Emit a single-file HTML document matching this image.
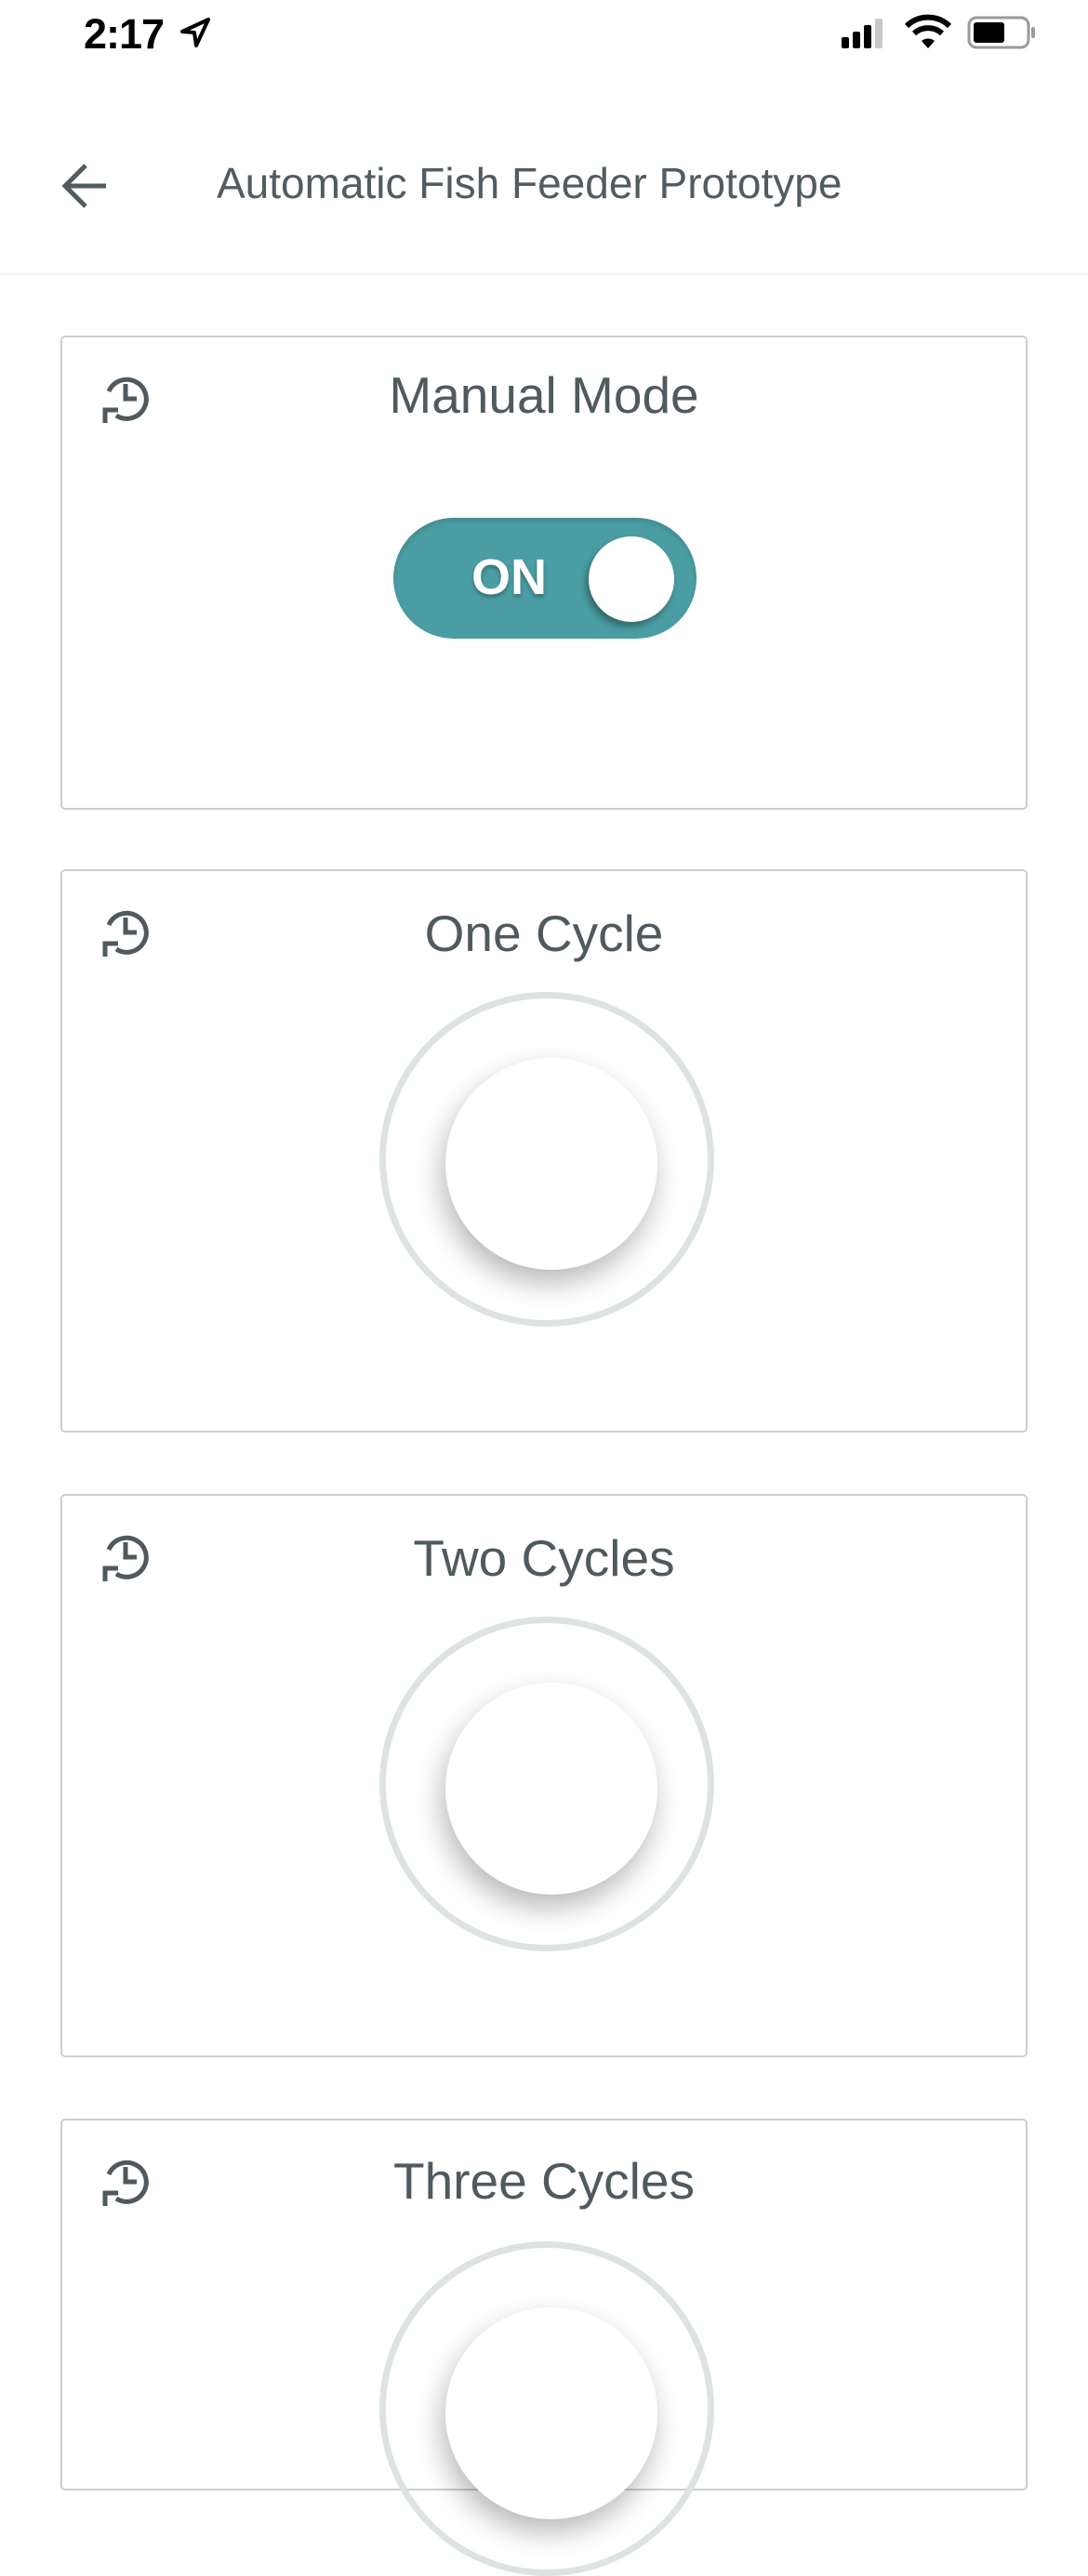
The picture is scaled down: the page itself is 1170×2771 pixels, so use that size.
<!DOCTYPE html>
<html><head><meta charset="utf-8"><style>
*{margin:0;padding:0;box-sizing:border-box}
body{width:1170px;height:2438px;overflow:hidden;background:#fff;font-family:"Liberation Sans",sans-serif;position:relative;color:#4f5a5e}
.abs{position:absolute}
.time{left:90px;top:11px;font-size:45px;font-weight:bold;color:#000;letter-spacing:-1px}
.title{left:233px;top:170px;font-size:46px;color:#515c61;letter-spacing:0px}
.divider{left:0;top:294px;width:1170px;height:2px;background:#f0f2f2}
.card{position:absolute;left:65px;width:1040px;border:2px solid #c9cfd0;border-radius:5px;background:#fff}
.ct{position:absolute;left:0;width:100%;text-align:center;font-size:55px;color:#4f5a5e}
.ic{position:absolute;left:40px;top:36px}
.ring{position:absolute;left:341px;width:360px;height:360px;border:7px solid #dde3e2;border-radius:50%}
.knob{position:absolute;left:64px;top:64px;width:228px;height:228px;border-radius:50%;background:#fff;box-shadow:-4px 14px 30px rgba(0,0,0,.28)}
</style></head><body>
<div class="abs time">2:17</div>
<svg class="abs" style="left:192px;top:18px" width="36" height="34" viewBox="0 0 36 34"><path d="M32 3 L4 16 L17 17 L19 31 Z" fill="none" stroke="#000" stroke-width="4" stroke-linejoin="round"/></svg>
<svg class="abs" style="left:905px;top:18px" width="52" height="34" viewBox="0 0 52 34"><rect x="0" y="22" width="8" height="12" rx="2" fill="#000"/><rect x="12" y="16" width="8" height="18" rx="2" fill="#000"/><rect x="24" y="9" width="8" height="25" rx="2" fill="#000"/><rect x="36" y="2" width="8" height="32" rx="2" fill="#c8c8c8"/></svg>
<svg class="abs" style="left:972px;top:15px" width="52" height="38" viewBox="0 0 52 38"><path d="M3 13 A33 33 0 0 1 49 13" fill="none" stroke="#000" stroke-width="6"/><path d="M11 21 A22 22 0 0 1 41 21" fill="none" stroke="#000" stroke-width="6"/><path d="M19 29 L26 37 L33 29 A11 11 0 0 0 19 29Z" fill="#000"/></svg>
<svg class="abs" style="left:1040px;top:17px" width="76" height="36" viewBox="0 0 76 36"><rect x="2" y="2" width="64" height="32" rx="8" fill="none" stroke="#9a9a9a" stroke-width="3"/><rect x="7" y="7" width="33" height="22" rx="3" fill="#000"/><rect x="69" y="12" width="4" height="12" rx="2" fill="#9a9a9a"/></svg>
<svg class="abs" style="left:64px;top:172px" width="56" height="56" viewBox="0 0 56 56"><path d="M50 28 H6 M28 6 L6 28 L28 50" fill="none" stroke="#515c61" stroke-width="5"/></svg>
<div class="abs title">Automatic Fish Feeder Prototype</div>
<div class="abs divider"></div>

<div class="card" style="top:361px;height:510px">
 <svg class="ic" width="56" height="60" viewBox="0 0 56 60"><path d="M10 22 A21 21 0 1 1 18 48" fill="none" stroke="#4f5a5e" stroke-width="5"/><path d="M28 14 V30 H40" fill="none" stroke="#4f5a5e" stroke-width="5"/><path d="M6 56 V42 H20" fill="none" stroke="#4f5a5e" stroke-width="5"/></svg>
 <div class="ct" style="top:30px">Manual Mode</div>
 <div style="position:absolute;left:356px;top:194px;width:326px;height:130px;border-radius:65px;background:#4a9ea3;box-shadow:inset 0 4px 6px rgba(0,0,0,.12)">
  <div style="position:absolute;left:84px;top:33px;font-size:54px;font-weight:bold;color:#fff;text-shadow:0 3px 4px rgba(0,0,0,.3)">ON</div>
  <div style="position:absolute;left:210px;top:20px;width:92px;height:92px;border-radius:50%;background:#fff;box-shadow:-3px 5px 8px rgba(0,0,0,.35)"></div>
 </div>
</div>

<div class="card" style="top:935px;height:606px">
 <svg class="ic" width="56" height="60" viewBox="0 0 56 60"><path d="M10 22 A21 21 0 1 1 18 48" fill="none" stroke="#4f5a5e" stroke-width="5"/><path d="M28 14 V30 H40" fill="none" stroke="#4f5a5e" stroke-width="5"/><path d="M6 56 V42 H20" fill="none" stroke="#4f5a5e" stroke-width="5"/></svg>
 <div class="ct" style="top:35px">One Cycle</div>
 <div class="ring" style="top:130px"><div class="knob"></div></div>
</div>

<div class="card" style="top:1607px;height:606px">
 <svg class="ic" width="56" height="60" viewBox="0 0 56 60"><path d="M10 22 A21 21 0 1 1 18 48" fill="none" stroke="#4f5a5e" stroke-width="5"/><path d="M28 14 V30 H40" fill="none" stroke="#4f5a5e" stroke-width="5"/><path d="M6 56 V42 H20" fill="none" stroke="#4f5a5e" stroke-width="5"/></svg>
 <div class="ct" style="top:35px">Two Cycles</div>
 <div class="ring" style="top:130px"><div class="knob"></div></div>
</div>

<div class="card" style="top:2279px;height:400px">
 <svg class="ic" width="56" height="60" viewBox="0 0 56 60"><path d="M10 22 A21 21 0 1 1 18 48" fill="none" stroke="#4f5a5e" stroke-width="5"/><path d="M28 14 V30 H40" fill="none" stroke="#4f5a5e" stroke-width="5"/><path d="M6 56 V42 H20" fill="none" stroke="#4f5a5e" stroke-width="5"/></svg>
 <div class="ct" style="top:33px">Three Cycles</div>
 <div class="ring" style="top:130px"><div class="knob"></div></div>
</div>
</body></html>
